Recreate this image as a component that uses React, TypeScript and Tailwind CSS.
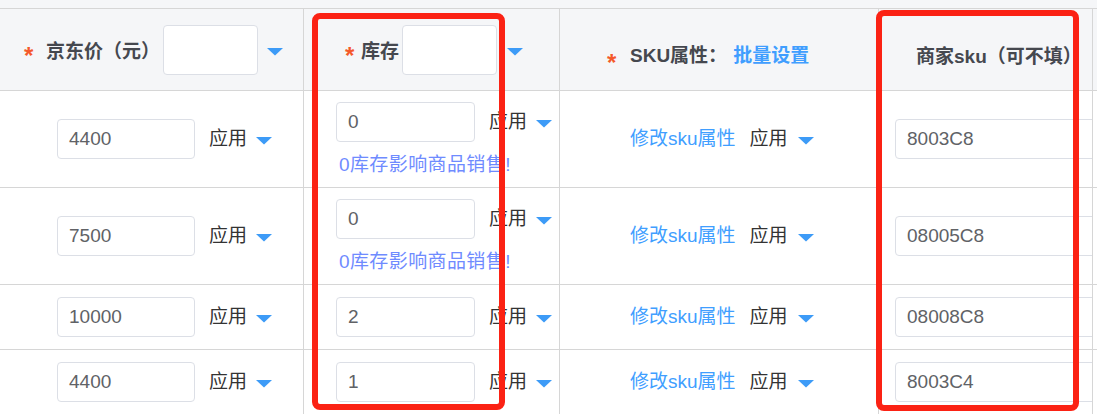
import React from "react";

type Row = { price: string; stock: string; sku: string; warn?: boolean };

const rows: Row[] = [
  { price: "4400", stock: "0", sku: "8003C8", warn: true },
  { price: "7500", stock: "0", sku: "08005C8", warn: true },
  { price: "10000", stock: "2", sku: "08008C8" },
  { price: "4400", stock: "1", sku: "8003C4" },
];

function Caret() {
  return (
    <svg width="16" height="8" viewBox="0 0 16 8" className="shrink-0 mt-[4px]">
      <polygon points="0,0 16,0 8,7.5" fill="#3d9bf7" />
    </svg>
  );
}

function Star({ w }: { w: string }) {
  return (
    <span className={`${w} shrink-0 text-[24px] font-bold leading-none text-[#f4592b] translate-y-[6px]`}>*</span>
  );
}

function Field({ value, w, h = "h-[40px]" }: { value?: string; w: string; h?: string }) {
  return (
    <div
      className={`${w} ${h} shrink-0 flex items-center rounded-[4px] border border-[#dcdfe6] bg-white px-[11px] text-[19px] text-[#606266]`}
    >
      {value}
    </div>
  );
}

function Apply() {
  return <span className="ml-[14px] shrink-0 text-[19px] text-[#333333]">应用</span>;
}

export default function App() {
  return (
    <div
      className="relative w-[1097px] h-[414px] overflow-hidden bg-white"
      style={{ fontFamily: '"Liberation Sans", "Noto Sans CJK SC", sans-serif' }}
    >
      <div className="h-[8px] bg-[#f5f6f8]" />

      {/* header */}
      <div className="flex h-[83px] border-y border-[#d6d6d6] bg-[#f5f6f8] text-[19px] font-bold text-[#45484f]">
        <div className="w-[304px] shrink-0 flex items-center border-r border-[#d6d6d6] pl-[24px]">
          <Star w="w-[22px]" />
          <span className="mt-[5px] whitespace-nowrap">京东价（元）</span>
          <div className="ml-[3px]">
            <Field w="w-[95px]" h="h-[50px]" />
          </div>
          <span className="ml-[9px]">
            <Caret />
          </span>
        </div>
        <div className="w-[256px] shrink-0 flex items-center border-r border-[#d6d6d6] pl-[41px]">
          <Star w="w-[16px]" />
          <span className="mt-[5px] whitespace-nowrap">库存</span>
          <div className="ml-[3px]">
            <Field w="w-[95px]" h="h-[50px]" />
          </div>
          <span className="ml-[10px]">
            <Caret />
          </span>
        </div>
        <div className="w-[319px] shrink-0 flex items-center border-r border-[#d6d6d6] pl-[47px] pt-[14px]">
          <Star w="w-[23px]" />
          <span className="whitespace-nowrap">SKU属性：</span>
          <span className="ml-[6px] whitespace-nowrap text-[#409eff]">批量设置</span>
        </div>
        <div className="w-[214px] shrink-0 flex items-center border-r border-[#d6d6d6] pl-[37px] pt-[16px] overflow-hidden">
          <span className="whitespace-nowrap">商家sku（可不填）</span>
        </div>
        <div className="flex-1" />
      </div>

      {/* body rows */}
      {rows.map((r, i) => (
        <div key={i} className="flex border-b border-[#d6d6d6]">
          <div className="w-[304px] shrink-0 flex items-center border-r border-[#d6d6d6] pl-[57px]">
            <Field value={r.price} w="w-[138px]" />
            <Apply />
            <span className="ml-[9px]">
              <Caret />
            </span>
          </div>
          <div
            className={`w-[256px] shrink-0 flex flex-col justify-center border-r border-[#d6d6d6] pl-[32px] ${
              r.warn ? "pt-[11px] pb-[11px]" : "py-[12px]"
            }`}
          >
            <div className="flex items-center">
              <Field value={r.stock} w="w-[139px]" />
              <Apply />
              <span className="ml-[9px]">
                <Caret />
              </span>
            </div>
            {r.warn && (
              <div className="ml-[3px] mt-[12px] whitespace-nowrap text-[19px] leading-[22px] tracking-[0.4px] text-[#6f8bff]">
                0库存影响商品销售!
              </div>
            )}
          </div>
          <div className="w-[319px] shrink-0 flex items-center border-r border-[#d6d6d6] pl-[70px]">
            <span className="whitespace-nowrap text-[19px] text-[#409eff]">修改sku属性</span>
            <Apply />
            <span className="ml-[10px]">
              <Caret />
            </span>
          </div>
          <div className="w-[214px] shrink-0 flex items-center border-r border-[#d6d6d6] pl-[16px] overflow-hidden">
            <Field value={r.sku} w="w-[220px]" />
          </div>
          <div className="flex-1" />
        </div>
      ))}

      {/* red highlight frames */}
      <div className="absolute left-[312px] top-[13px] w-[193px] h-[397px] rounded-[8px] border-[6px] border-[#fb2214]" />
      <div className="absolute left-[876px] top-[10px] w-[203px] h-[401px] rounded-[8px] border-[6px] border-[#fb2214]" />
    </div>
  );
}
